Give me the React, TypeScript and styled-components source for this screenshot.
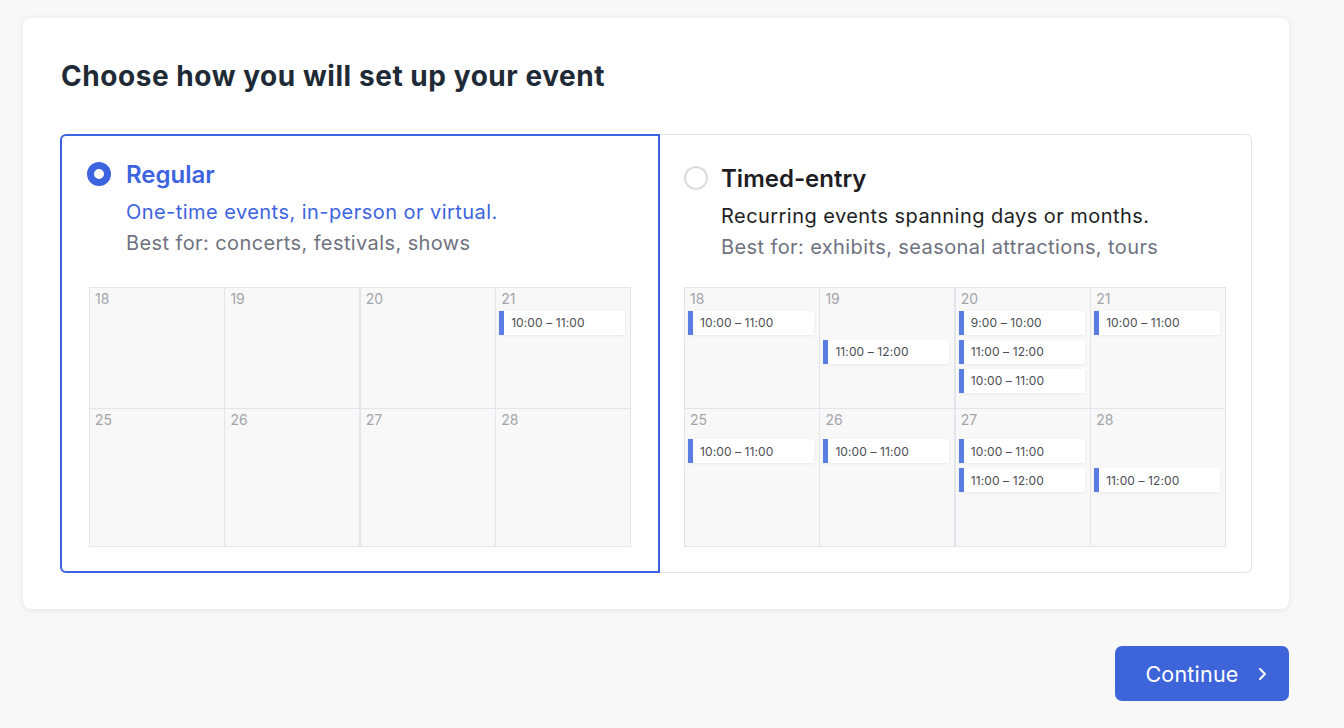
import React from 'react';
import styled, { createGlobalStyle } from 'styled-components';

const GlobalStyle = createGlobalStyle`
  body {
    margin: 0;
    background: #f8f8f8;
    font-family: Inter, "Open Sans", sans-serif;
  }
`;

const Page = styled.div`
  width: 1344px;
  height: 728px;
  padding: 18px 0 0 23px;
  box-sizing: border-box;
  display: flex;
  flex-direction: column;
`;

const Card = styled.div`
  width: 1266px;
  height: 591px;
  box-sizing: border-box;
  background: #fff;
  border-radius: 8px;
  box-shadow: 0 1px 6px rgba(30, 40, 60, 0.1);
  padding: 40px 37px 36px 37px;
`;

const Title = styled.h1`
  margin: 0 0 0 1px;
  font-size: 28px;
  line-height: 36px;
  font-weight: 700;
  color: #1e2a36;
  letter-spacing: 0.55px;
`;

const Options = styled.div`
  margin-top: 40px;
  display: flex;
  height: 439px;
`;

const Option = styled.div<{ $selected?: boolean }>`
  box-sizing: border-box;
  flex: ${(p) => (p.$selected ? '0 0 600px' : '0 0 592px')};
  min-width: 0;
  border: ${(p) => (p.$selected ? '2px solid #3d64e0' : '1.5px solid #e2e4e8')};
  border-left-width: ${(p) => (p.$selected ? '2px' : '0')};
  border-radius: ${(p) => (p.$selected ? '6px 0 0 6px' : '0 6px 6px 0')};
  padding: ${(p) => (p.$selected ? '24px 27px 24px 27px' : '27px 25px 25px 24px')};
  display: flex;
  flex-direction: column;
  justify-content: space-between;
`;

const Header = styled.div<{ $selected?: boolean }>`
  display: flex;
  gap: ${(p) => (p.$selected ? '15px' : '13px')};
  margin-left: ${(p) => (p.$selected ? '-2px' : '0')};
  margin-top: ${(p) => (p.$selected ? '1px' : '3px')};
`;

const Radio = styled.span<{ $checked?: boolean }>`
  flex: none;
  width: 24px;
  height: 24px;
  box-sizing: border-box;
  border-radius: 50%;
  margin-top: 1px;
  border: ${(p) => (p.$checked ? '7px solid #3d64e0' : '2px solid #dcdde2')};
  background: #fff;
`;

const Texts = styled.div`
  display: flex;
  flex-direction: column;
`;

const OptionTitle = styled.div<{ $selected?: boolean }>`
  font-size: 24px;
  line-height: 28px;
  font-weight: 600;
  color: ${(p) => (p.$selected ? '#3d64e0' : '#1e1e24')};
`;

const Subtitle = styled.div<{ $selected?: boolean }>`
  margin-top: 8px;
  font-size: 20px;
  line-height: 31px;
  letter-spacing: 0.45px;
  color: ${(p) => (p.$selected ? '#3d64e0' : '#1e1e24')};
`;

const BestFor = styled.div`
  font-size: 20px;
  line-height: 31px;
  letter-spacing: 0.4px;
  color: #6f7280;
`;

const Grid = styled.div`
  display: grid;
  grid-template-columns: repeat(4, 1fr);
  grid-template-rows: 120px 137px;
  width: 542px;
  background: #e3e5e9;
  gap: 1.5px;
  border: 1.5px solid #e3e5e9;
  box-sizing: border-box;
`;

const Cell = styled.div<{ $top: number }>`
  background: #f8f8f8;
  padding: 3px 3px 0 3px;
  display: flex;
  flex-direction: column;
  gap: 5px;
  --top: ${(p) => p.$top}px;
`;

const DayNum = styled.div`
  font-size: 14px;
  line-height: 16px;
  color: #a3a5ab;
  margin-left: 2px;
  height: var(--top);
`;

const Event = styled.div`
  height: 24px;
  display: flex;
  align-items: center;
  background: #fff;
  box-shadow: 0 1px 3px rgba(0, 0, 0, 0.06);
  margin-right: 2px;
  font-size: 12px;
  letter-spacing: 0.1px;
  color: #4b4d55;
  &::before {
    content: '';
    width: 5px;
    align-self: stretch;
    background: #5b7de3;
    margin-right: 7px;
  }
`;

const Blank = styled.div`
  height: 24px;
`;

const Footer = styled.div`
  width: 1266px;
  display: flex;
  justify-content: flex-end;
  margin-top: 37px;
`;

const ContinueButton = styled.button`
  width: 174px;
  height: 55px;
  border: none;
  border-radius: 7px;
  background: #3d64d8;
  color: #fff;
  font-family: inherit;
  font-size: 21.5px;
  letter-spacing: 0.2px;
  display: flex;
  align-items: center;
  justify-content: center;
  gap: 18px;
  padding: 0 0 0 8px;
  cursor: pointer;
`;

type Day = { day: number; events: (string | null)[] };

const regularDays: Day[][] = [
  [
    { day: 18, events: [] },
    { day: 19, events: [] },
    { day: 20, events: [] },
    { day: 21, events: ['10:00 – 11:00'] },
  ],
  [
    { day: 25, events: [] },
    { day: 26, events: [] },
    { day: 27, events: [] },
    { day: 28, events: [] },
  ],
];

const timedDays: Day[][] = [
  [
    { day: 18, events: ['10:00 – 11:00'] },
    { day: 19, events: [null, '11:00 – 12:00'] },
    { day: 20, events: ['9:00 – 10:00', '11:00 – 12:00', '10:00 – 11:00'] },
    { day: 21, events: ['10:00 – 11:00'] },
  ],
  [
    { day: 25, events: ['10:00 – 11:00'] },
    { day: 26, events: ['10:00 – 11:00'] },
    { day: 27, events: ['10:00 – 11:00', '11:00 – 12:00'] },
    { day: 28, events: [null, '11:00 – 12:00'] },
  ],
];

function Calendar({ rows }: { rows: Day[][] }) {
  return (
    <Grid>
      {rows.map((row, r) =>
        row.map((d) => (
          <Cell key={d.day} $top={r === 0 ? 15 : 22}>
            <DayNum>{d.day}</DayNum>
            {d.events.map((e, i) =>
              e ? <Event key={i}>{e}</Event> : <Blank key={i} />
            )}
          </Cell>
        ))
      )}
    </Grid>
  );
}

function Chevron() {
  return (
    <svg width="10" height="16" viewBox="0 0 10 16" fill="none">
      <path d="M3 3l5 5-5 5" stroke="#fff" strokeWidth="2" strokeLinecap="round" strokeLinejoin="round" />
    </svg>
  );
}

export default function App() {
  return (
    <>
      <GlobalStyle />
      <Page>
        <Card>
          <Title>Choose how you will set up your event</Title>
          <Options>
            <Option $selected>
              <Header $selected>
                <Radio $checked />
                <Texts>
                  <OptionTitle $selected>Regular</OptionTitle>
                  <Subtitle $selected>One-time events, in-person or virtual.</Subtitle>
                  <BestFor>Best for: concerts, festivals, shows</BestFor>
                </Texts>
              </Header>
              <Calendar rows={regularDays} />
            </Option>
            <Option>
              <Header>
                <Radio />
                <Texts>
                  <OptionTitle>Timed-entry</OptionTitle>
                  <Subtitle>Recurring events spanning days or months.</Subtitle>
                  <BestFor>Best for: exhibits, seasonal attractions, tours</BestFor>
                </Texts>
              </Header>
              <Calendar rows={timedDays} />
            </Option>
          </Options>
        </Card>
        <Footer>
          <ContinueButton>
            Continue
            <Chevron />
          </ContinueButton>
        </Footer>
      </Page>
    </>
  );
}
